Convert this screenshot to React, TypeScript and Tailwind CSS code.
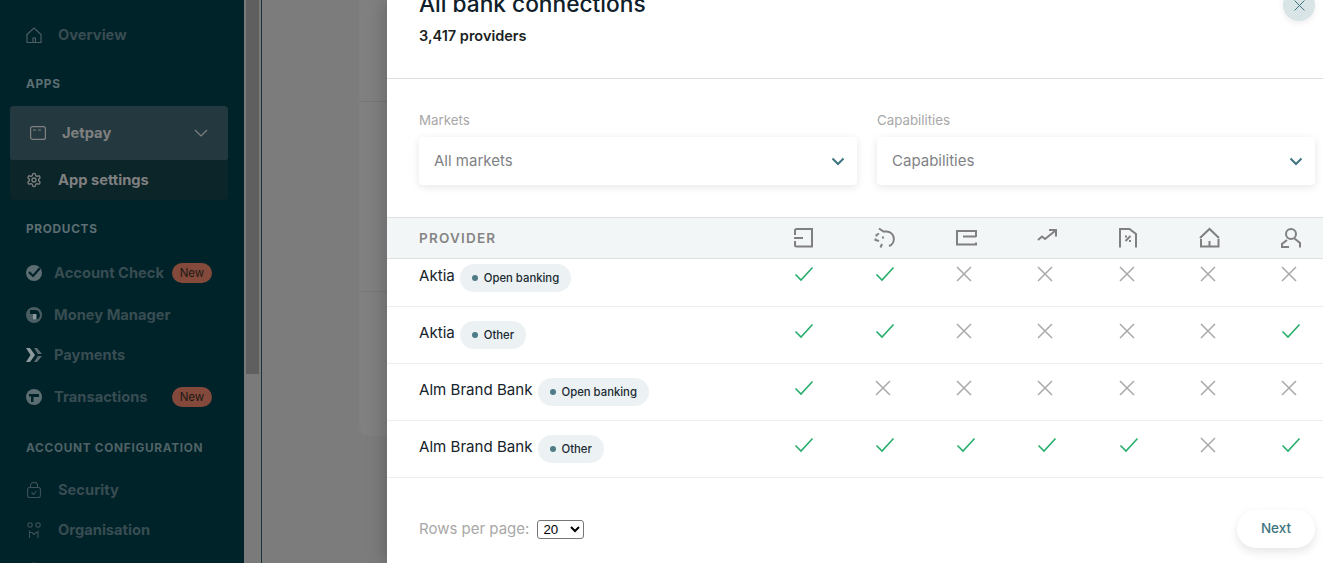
import React from "react";

const Check = () => (
  <svg width="20" height="16" viewBox="0 0 20 16" fill="none" className="ml-[4px]">
    <path d="M1.500 8.500 7 14 18.500 1.500" stroke="#27ae6c" strokeWidth="1.600" />
  </svg>
);
const Cross = () => (
  <svg width="16" height="16" viewBox="0 0 16 16" fill="none">
    <path d="M1 1 15 15M15 1 1 15" stroke="#a9a9a9" strokeWidth="1.500" />
  </svg>
);

const headIcons = [
  <>
    <path d="M2 8V3.500A1.500 1.500 0 0 1 3.500 2H19V19.500H3.500A1.500 1.500 0 0 1 2 18V14" />
    <path d="M1 11H10" />
  </>,
  <>
    <path d="M5 1.500 9.500 4.500H12.500A7.500 7.500 0 0 1 15 19" />
    <path d="M6.500 20.500 8 17" />
    <path d="M5 6.500 2.500 8V9.500M1.500 11.500V13L5 14" />
    <path d="M9 9.500V11.500" />
  </>,
  <>
    <path d="M20 10V4H1V17.500H20V15.500" />
    <path d="M7 9.500H20" />
  </>,
  <>
    <path d="M1 13 5 9.500 8 12 18 4" />
    <path d="M12 3H19V9.500" />
  </>,
  <>
    <path d="M2 20.500V2H11.500L18 7V20.500" />
    <path d="M7.500 14 12.500 9" />
    <path d="M7 9.500H9M11 14H13" />
  </>,
  <>
    <path d="M1 11 10.500 2 20 11" />
    <path d="M2 12V19.500H19.500V12" />
    <path d="M10.500 14V19" />
  </>,
  <>
    <circle cx="11" cy="7" r="5" />
    <path d="M14.500 11.500 20 16V20.500" />
    <path d="M7 13 2 17V20H9" />
  </>,
];

const rows: { name: string; tag: string; vals: number[]; first?: boolean }[] = [
  { name: "Aktia", tag: "Open banking", vals: [1, 1, 0, 0, 0, 0, 0], first: true },
  { name: "Aktia", tag: "Other", vals: [1, 1, 0, 0, 0, 0, 1] },
  { name: "Alm Brand Bank", tag: "Open banking", vals: [1, 0, 0, 0, 0, 0, 0] },
  { name: "Alm Brand Bank", tag: "Other", vals: [1, 1, 1, 1, 1, 0, 1] },
];

const Chevron = () => (
  <svg width="14" height="9" viewBox="0 0 14 9" fill="none">
    <path d="M1.500 1.500 7 7 12.500 1.500" stroke="#3f7580" strokeWidth="2" />
  </svg>
);

const Field = ({ label, value }: { label: string; value: string }) => (
  <div className="w-[438px] shrink-0">
    <div className="text-[13.300px] leading-[18px] h-[18px] text-[#a8a8a8]">{label}</div>
    <div className="mt-[8px] h-[48px] rounded-[4px] bg-white shadow-[0_2px_8px_rgba(0,0,0,0.10)] flex items-center justify-between pl-[15px] pr-[12px]">
      <span className="text-[15px] text-[#7f8285]">{value}</span>
      <Chevron />
    </div>
  </div>
);

const Badge = () => (
  <span className="ml-auto h-[20px] w-[40px] rounded-full bg-[#83493a] text-[#1e1a18] text-[11.500px] leading-[20px] text-center">
    New
  </span>
);

const NavItem = ({
  icon,
  label,
  h,
  gap,
  badge,
}: {
  icon: React.ReactNode;
  label?: string;
  h: string;
  gap: string;
  badge?: boolean;
}) => (
  <div className={`flex items-center pl-[26px] pr-[32px] ${h}`}>
    <span className="w-[16px] h-[16px] shrink-0 flex items-center justify-center">{icon}</span>
    {label && <span className={`text-[14.700px] font-bold text-[#384d52] ${gap}`}>{label}</span>}
    {badge && <Badge />}
  </div>
);

const Section = ({ children, cls }: { children: string; cls: string }) => (
  <div className={`pl-[26px] text-[11.800px] font-bold tracking-[0.06em] leading-[14px] ${cls}`}>{children}</div>
);

export default function App() {
  return (
    <div
      className="flex h-[563px] w-[1323px] overflow-hidden bg-[#7c7c7c]"
      style={{ fontFamily: "Inter, 'Liberation Sans', sans-serif" }}
    >
      <aside className="w-[244px] shrink-0 bg-[#002229] overflow-hidden">
        <NavItem
          h="h-[30px] mt-[20px]"
          gap="ml-[16px]"
          label="Overview"
          icon={
            <svg width="16" height="16" viewBox="0 0 16 16" fill="none" stroke="#4a5e63" strokeWidth="1.200">
              <path d="M.5 8 8 1l7.500 7M1 7.500V15.500H15V7.500M7 15.500V11H9.500V15.500" />
            </svg>
          }
        />
        <Section cls="mt-[27px] text-[#5d6f73]">APPS</Section>
        <div className="ml-[10px] mr-[16px] mt-[15px] h-[54px] rounded-t-[4px] rounded-b-[2px] bg-[#24393f] flex items-center pl-[20px] pr-[20px]">
          <svg width="16" height="14" viewBox="0 0 16 14" fill="none" stroke="#808080" strokeWidth="1.200">
            <rect x=".6" y=".6" width="14.800" height="12.800" rx="2" />
            <path d="M3 4H6M8 4H11" />
          </svg>
          <span className="ml-[16px] text-[14.700px] font-bold text-[#808080]">Jetpay</span>
          <svg className="ml-auto" width="14" height="8" viewBox="0 0 14 8" fill="none" stroke="#808080" strokeWidth="1.200">
            <path d="M1 1 7 7 13 1" />
          </svg>
        </div>
        <div className="ml-[10px] mr-[16px] h-[40px] rounded-b-[4px] bg-[#0b2529] flex items-center pl-[16px]">
          <svg width="16" height="16" viewBox="0 0 24 24" fill="none" stroke="#808080" strokeWidth="2">
            <path d="M12.220 2h-.44a2 2 0 0 0-2 2v.18a2 2 0 0 1-1 1.730l-.43.250a2 2 0 0 1-2 0l-.15-.080a2 2 0 0 0-2.730.730l-.22.380a2 2 0 0 0 .730 2.730l.15.100a2 2 0 0 1 1 1.720v.51a2 2 0 0 1-1 1.740l-.15.090a2 2 0 0 0-.730 2.730l.22.380a2 2 0 0 0 2.730.730l.15-.080a2 2 0 0 1 2 0l.43.250a2 2 0 0 1 1 1.730V20a2 2 0 0 0 2 2h.44a2 2 0 0 0 2-2v-.18a2 2 0 0 1 1-1.730l.43-.250a2 2 0 0 1 2 0l.15.080a2 2 0 0 0 2.730-.730l.22-.390a2 2 0 0 0-.730-2.730l-.15-.080a2 2 0 0 1-1-1.740v-.5a2 2 0 0 1 1-1.740l.15-.090a2 2 0 0 0 .730-2.730l-.22-.380a2 2 0 0 0-2.730-.730l-.15.080a2 2 0 0 1-2 0l-.43-.250a2 2 0 0 1-1-1.730V4a2 2 0 0 0-2-2z" />
            <circle cx="12" cy="12" r="3" />
          </svg>
          <span className="ml-[16px] text-[14.700px] font-bold text-[#808080]">App settings</span>
        </div>
        <Section cls="mt-[22px] text-[#5d6f73]">PRODUCTS</Section>
        <NavItem
          h="h-[30px] mt-[22px]"
          gap="ml-[12px]"
          label="Account Check"
          badge
          icon={
            <svg width="16" height="16" viewBox="0 0 16 16">
              <circle cx="8" cy="8" r="8" fill="#5c6e72" />
              <path d="M3 7 7 11 14 3" fill="none" stroke="#002229" strokeWidth="2.200" />
            </svg>
          }
        />
        <NavItem
          h="h-[30px] mt-[12px]"
          gap="ml-[12px]"
          label="Money Manager"
          icon={
            <svg width="16" height="16" viewBox="0 0 16 16">
              <circle cx="8" cy="8" r="8" fill="#4a5e63" />
              <path d="M4 3h5a5 5 0 0 1 2 9.500H7V7H4z" fill="#002229" />
              <rect x="7" y="7" width="3.500" height="5.500" fill="#8c9a9d" />
            </svg>
          }
        />
        <NavItem
          h="h-[30px] mt-[10px]"
          gap="ml-[12px]"
          label="Payments"
          icon={
            <svg width="16" height="14" viewBox="0 0 16 14" fill="none">
              <path d="M0 0H4L9 7 4 14H0L4.500 7z" fill="#8c9a9d" />
              <path d="M8 0h3l5 6h-4zM8 14h3l5-6h-4z" fill="#5c6e72" />
            </svg>
          }
        />
        <NavItem
          h="h-[30px] mt-[12px]"
          gap="ml-[12px]"
          label="Transactions"
          badge
          icon={
            <svg width="16" height="16" viewBox="0 0 16 16">
              <circle cx="8" cy="8" r="8" fill="#5c6e72" />
              <path d="M3 5h10v3H7.500v5H5V7.500H3z" fill="#002229" />
            </svg>
          }
        />
        <Section cls="mt-[29px] text-[#4f6266]">ACCOUNT CONFIGURATION</Section>
        <NavItem
          h="h-[30px] mt-[20px]"
          gap="ml-[16px]"
          label="Security"
          icon={
            <svg width="14" height="16" viewBox="0 0 14 16" fill="none" stroke="#3d5257" strokeWidth="1.100">
              <rect x=".6" y="5.500" width="12.800" height="10" rx="2" />
              <path d="M3.500 5.500V3.500a3.500 3 0 0 1 7 0V5.500M4.500 10.500 6.500 12.500 9.500 9" />
            </svg>
          }
        />
        <NavItem
          h="h-[30px] mt-[10px]"
          gap="ml-[16px]"
          label="Organisation"
          icon={
            <svg width="14" height="16" viewBox="0 0 14 16" fill="none" stroke="#3d5257" strokeWidth="1.100">
              <circle cx="3" cy="3" r="2.200" />
              <circle cx="11" cy="3" r="2.200" />
              <path d="M2.500 16V8.500M11 16V8.500M2.500 10.500H5L7 12.500 9 10.500H11" />
            </svg>
          }
        />
        <NavItem
          h="h-[30px] mt-[10px]"
          gap="ml-[16px]"
          icon={
            <svg width="16" height="16" viewBox="0 0 16 16" fill="none" stroke="#3d5257" strokeWidth="1.100">
              <circle cx="8" cy="8" r="7" />
            </svg>
          }
        />
      </aside>

      <div className="w-[17px] shrink-0 bg-[#7a7a7a] flex pl-[2px]">
        <div className="w-[13px] h-[374px] bg-[#5f5f5f]" />
      </div>
      <div className="w-px shrink-0 bg-[#17343a]" />

      <div className="w-[125px] shrink-0 pl-[97px]">
        <div className="h-[436px] flex flex-col rounded-bl-[10px] bg-[#808080] overflow-hidden">
          <div className="h-[102px] shrink-0 border-b border-[#767676]" />
          <div className="h-[190px] shrink-0 border-b border-[#787878]" />
        </div>
      </div>

      <main className="relative w-[936px] shrink-0 bg-white text-[#16232a] flex flex-col shadow-[-4px_0_16px_rgba(0,0,0,0.18)]">
        <header className="relative h-[79px] shrink-0 border-b border-[#dedede] pl-[32px]">
          <div className="overflow-hidden h-[46px]">
            <h1 className="-mt-[9px] text-[22.700px] leading-[26px] font-medium text-[#10202a]">All bank connections</h1>
            <p className="mt-[9px] text-[14.500px] leading-[20px] font-semibold text-[#1b1f23]">3,417 providers</p>
          </div>
          <button className="absolute right-[8px] -top-[11px] w-[32px] h-[32px] rounded-full bg-[#d9e4e6] shadow-[0_2px_6px_rgba(0,0,0,0.08)] flex items-center justify-center">
            <svg width="11" height="11" viewBox="0 0 11 11" fill="none" stroke="#3f7580" strokeWidth="1">
              <path d="M.5.5l10 10M10.500.5l-10 10" />
            </svg>
          </button>
        </header>

        <div className="flex gap-[20px] pl-[32px] mt-[32px] h-[106px] shrink-0">
          <Field label="Markets" value="All markets" />
          <Field label="Capabilities" value="Capabilities" />
        </div>

        <div className="flex items-center h-[42px] shrink-0 bg-[#f3f6f7] border-y border-[#dfe1e1] pl-[32px]">
          <div className="w-[342.200px] shrink-0 text-[13.500px] font-semibold tracking-[0.09em] text-[#858585] mt-[1px]">PROVIDER</div>
          {headIcons.map((ic, i) => (
            <div key={i} className="w-[81.200px] shrink-0 flex justify-center -mt-[1px]">
              <svg width="21" height="22" viewBox="0 0 21 22" fill="none" stroke="#808080" strokeWidth="2" className="ml-[4px]">
                {ic}
              </svg>
            </div>
          ))}
        </div>

        {rows.map((r, i) => (
          <div
            key={i}
            className={`flex shrink-0 border-b border-[#ededed] pl-[32px] ${r.first ? "h-[48px] items-start pt-[5px]" : "h-[57px] items-center pt-0"}`}
          >
            <div className="w-[342.200px] shrink-0 flex items-center">
              <span className="text-[15.100px] leading-[20px] -mt-[4px] text-[#16232a]">{r.name}</span>
              <span className="ml-[5px] h-[28px] rounded-full bg-[#ecf1f3] flex items-center pl-[12px] pr-[12px]">
                <span className="w-[6px] h-[6px] rounded-full bg-[#4d7c86]" />
                <span className="ml-[6px] text-[11.300px] font-medium text-[#1a2a32]">{r.tag}</span>
              </span>
            </div>
            {r.vals.map((v, j) => (
              <div key={j} className={`w-[81.200px] shrink-0 flex justify-center ${r.first ? "pt-[2px]" : "-mt-[8px]"}`}>
                {v ? <Check /> : <Cross />}
              </div>
            ))}
          </div>
        ))}

        <div className="flex items-center h-[85px] shrink-0 pl-[32px] pr-[8px] pt-[18px]">
          <span className="text-[15px] text-[#a8a8a8]">Rows per page:</span>
          <select
            defaultValue="20"
            className="ml-[8px] w-[47px] h-[19px] border border-[#767676] rounded-[3px] bg-white text-[13.300px] text-black pl-[1px]"
            style={{ fontFamily: "Arial, 'Liberation Sans', sans-serif" }}
          >
            <option>10</option>
            <option>20</option>
            <option>50</option>
          </select>
          <button className="ml-auto -mt-[2px] w-[78px] h-[38px] rounded-full bg-white shadow-[0_4px_10px_rgba(0,0,0,0.10)] text-[13.500px] font-medium text-[#3f7580]">
            Next
          </button>
        </div>
      </main>
    </div>
  );
}
